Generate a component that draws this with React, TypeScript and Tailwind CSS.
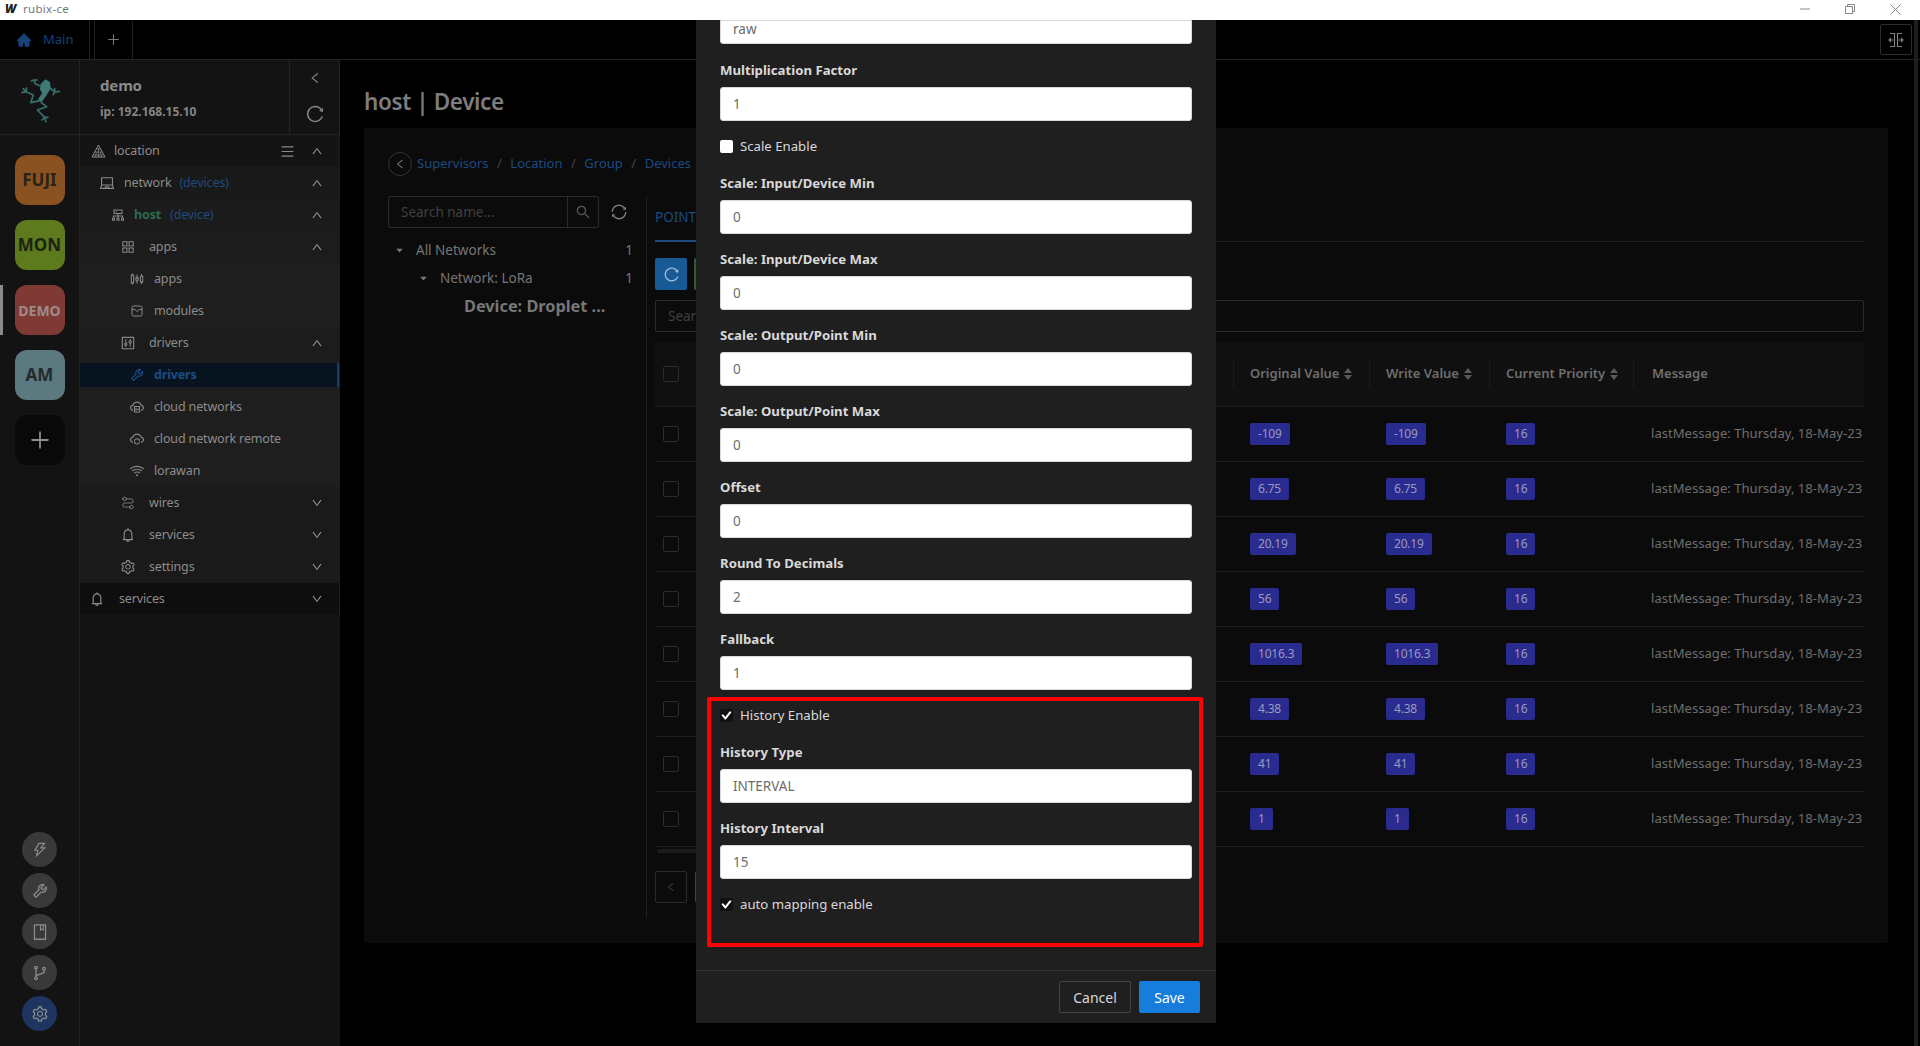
import React from "react";
import {
  AiFillHome, AiOutlinePlus, AiOutlineLeft, AiOutlineReload, AiOutlineMenu, AiOutlineUp, AiOutlineDown,
  AiOutlineLaptop, AiOutlineCluster, AiOutlineAppstore, AiOutlineSliders, AiOutlineControl, AiOutlineTool,
  AiOutlineCloudServer, AiOutlineCloudSync, AiOutlineWifi, AiOutlineBell, AiOutlineSetting, AiOutlineSearch,
  AiOutlineSync, AiOutlineThunderbolt, AiOutlineBook, AiOutlineBranches, AiOutlineCheck, AiFillCaretDown,
} from "react-icons/ai";
import { Route } from "lucide-react";

function Frog() {
  return (
    <svg width="70" height="70" viewBox="0 0 210 210" fill="none" stroke="#37706b" strokeWidth="5" strokeLinejoin="round" strokeLinecap="round">
      <polygon points="92,72 106,58 120,66 122,86 108,108 94,128 84,118 96,100 90,88" fill="#3f7a75" stroke="none" />
      <polyline points="92,78 76,72 72,60" />
      <polyline points="64,63 72,60 82,60" />
      <polyline points="120,84 134,96 148,94" />
      <polyline points="134,86 134,96 130,104" />
      <polyline points="90,122 62,128 70,105 48,95 40,86" />
      <polyline points="50,84 48,95 36,98" />
      <polyline points="94,128 110,140 82,150 104,172 108,185" />
      <polyline points="96,180 104,172 114,172" />
    </svg>
  );
}

function Pyramid() {
  return (
    <svg width="15" height="14" viewBox="0 0 15 14" fill="none" stroke="#8c8c8c" strokeWidth="1">
      <path d="M7.5 1 L14 13 H1 Z" />
      <path d="M5.5 5 H9.5 M4 8 H11 M3 11 H12 M7.5 4 V13 M5.5 8 L4.5 13 M9.5 8 L10.5 13" strokeWidth="0.7" />
    </svg>
  );
}

function ModuleBox() {
  return (
    <svg width="14" height="14" viewBox="0 0 14 14" fill="none" stroke="currentColor" strokeWidth="1">
      <rect x="2" y="2" width="10" height="10" rx="1.5" />
      <path d="M2 5.5 H4.8 L7 7.5 L9.2 5.5 H12" />
    </svg>
  );
}

const up = <AiOutlineUp size={12} className="text-[#a0a0a0]" />;
const down = <AiOutlineDown size={12} className="text-[#a0a0a0]" />;

function Arrow({ children }: { children: React.ReactNode }) {
  return <span className="ml-auto w-[44px] flex justify-center">{children}</span>;
}

function Sub({ icon, label }: { icon: React.ReactNode; label: string }) {
  return (
    <div className="flex items-center h-8 pl-[49px] bg-[#1e1e1e]">
      <span className="w-4 flex justify-center text-[#8a8a8a]">{icon}</span>
      <span className="ml-[9px]">{label}</span>
    </div>
  );
}

function Group({ icon, label, open, bg }: { icon: React.ReactNode; label: string; open?: boolean; bg: string }) {
  return (
    <div className={`flex items-center h-8 pl-[40px] ${bg}`}>
      <span className="w-4 flex justify-center text-[#8a8a8a]">{icon}</span>
      <span className="ml-[13px]">{label}</span>
      <Arrow>{open ? up : down}</Arrow>
    </div>
  );
}

function Sidebar() {
  return (
    <div className="w-[260px] shrink-0 flex flex-col bg-[#131313] text-[12.5px] tracking-[-0.15px] text-[#8c8c8c]">
      <div className="h-[75px] shrink-0 flex border-b border-b-[#242424] border-r border-r-[#242424]">
        <div className="flex-1 pl-5 pt-[13px]">
          <div className="text-[15px] font-bold text-[#8a8a8a] leading-6">demo</div>
          <div className="mt-[5px] text-[12px] font-bold tracking-normal text-[#858585] leading-5">ip: 192.168.15.10</div>
        </div>
        <div className="w-[50px] border-l border-l-[#242424] flex flex-col items-center pt-[11px] text-[#858585]">
          <AiOutlineLeft size={14} />
          <AiOutlineReload size={20} className="mt-[19px]" />
        </div>
      </div>
      <div className="border-r border-r-[#1d1d1d]">
        <div className="flex items-center h-8 pl-[10px] bg-[#141414]">
          <span className="w-4 flex justify-center"><Pyramid /></span>
          <span className="ml-[8px]">location</span>
          <span className="ml-auto text-[#8a8a8a]"><AiOutlineMenu size={15} /></span>
          <span className="w-[44px] flex justify-center">{up}</span>
        </div>
        <div className="flex items-center h-8 pl-[19px] bg-[#191919]">
          <span className="w-4 flex justify-center text-[#8a8a8a]"><AiOutlineLaptop size={16} /></span>
          <span className="ml-[9px]">network</span>
          <span className="ml-[8px] text-[#1f4a80]">(devices)</span>
          <Arrow>{up}</Arrow>
        </div>
        <div className="flex items-center h-8 pl-[30px] bg-[#1b1b1b]">
          <span className="w-4 flex justify-center text-[#8a8a8a]"><AiOutlineCluster size={16} /></span>
          <span className="ml-[8px] font-bold text-[#2f6b50]">host</span>
          <span className="ml-[9px] text-[#1f4a80]">(device)</span>
          <Arrow>{up}</Arrow>
        </div>
        <Group icon={<AiOutlineAppstore size={16} />} label="apps" open bg="bg-[#1c1c1c]" />
        <Sub icon={<AiOutlineSliders size={16} />} label="apps" />
        <Sub icon={<ModuleBox />} label="modules" />
        <Group icon={<AiOutlineControl size={16} />} label="drivers" open bg="bg-[#1c1c1c]" />
        <div className="h-8 py-1 bg-[#1e1e1e]">
          <div className="h-6 flex items-center pl-[49px] bg-[#07131e] border-r-2 border-r-[#17406e] font-bold text-[#1c4c86]">
            <span className="w-4 flex justify-center"><AiOutlineTool size={16} /></span>
            <span className="ml-[9px]">drivers</span>
          </div>
        </div>
        <Sub icon={<AiOutlineCloudServer size={16} />} label="cloud networks" />
        <Sub icon={<AiOutlineCloudSync size={16} />} label="cloud network remote" />
        <Sub icon={<AiOutlineWifi size={16} />} label="lorawan" />
        <Group icon={<Route size={14} strokeWidth={1.4} className="-scale-x-100" />} label="wires" bg="bg-[#1a1a1a]" />
        <Group icon={<AiOutlineBell size={16} />} label="services" bg="bg-[#1a1a1a]" />
        <Group icon={<AiOutlineSetting size={16} />} label="settings" bg="bg-[#1a1a1a]" />
        <div className="flex items-center h-8 pl-[9px] bg-[#0e0e0e]">
          <span className="w-4 flex justify-center text-[#8a8a8a]"><AiOutlineBell size={16} /></span>
          <span className="ml-[14px]">services</span>
          <Arrow>{down}</Arrow>
        </div>
      </div>
    </div>
  );
}

function Badge({ text, bg, fg }: { text: string; bg: string; fg: string }) {
  return (
    <div className={`w-[50px] h-[50px] rounded-[12px] flex items-center justify-center font-bold ${bg} ${fg}`}>{text}</div>
  );
}

function Round({ icon, active }: { icon: React.ReactNode; active?: boolean }) {
  return (
    <div className={`w-[35px] h-[35px] rounded-full flex items-center justify-center text-[#8c8c8c] ${active ? "bg-[#1d3560]" : "bg-[#393939]"}`}>
      {icon}
    </div>
  );
}

function Rail() {
  return (
    <div className="w-20 shrink-0 bg-[#131313] border-r border-r-[#242424] flex flex-col relative">
      <div className="h-[75px] shrink-0 border-b border-b-[#242424] pl-[10px]">
        <Frog />
      </div>
      <div className="flex flex-col items-center gap-[15px] pt-5">
        <Badge text="FUJI" bg="bg-[#8a5220]" fg="text-[#2a2118] text-[17px]" />
        <Badge text="MON" bg="bg-[#5d7a1d]" fg="text-[#1a2410] text-[17px]" />
        <Badge text="DEMO" bg="bg-[#7f3a36]" fg="text-[#a08a86] text-[14px]" />
        <Badge text="AM" bg="bg-[#5d7980]" fg="text-[#232a2c] text-[17px]" />
        <div className="w-[50px] h-[50px] rounded-[12px] bg-[#090909] flex items-center justify-center text-[#8c8c8c]">
          <AiOutlinePlus size={24} />
        </div>
      </div>
      <div className="absolute left-0 top-[225px] w-[3px] h-[50px] bg-[#8a8a8a]" />
      <div className="mt-auto pb-[15px] flex flex-col items-center gap-[6px]">
        <Round icon={<AiOutlineThunderbolt size={18} />} />
        <Round icon={<AiOutlineTool size={18} />} />
        <Round icon={<AiOutlineBook size={18} />} />
        <Round icon={<AiOutlineBranches size={18} />} />
        <Round icon={<AiOutlineSetting size={18} />} active />
      </div>
    </div>
  );
}

function Sorter() {
  return (
    <svg width="8" height="12" viewBox="0 0 8 12" className="ml-[5px] shrink-0" fill="#5a5a5a">
      <path d="M4 0 L8 5 H0 Z M4 12 L0 7 H8 Z" />
    </svg>
  );
}

const rows = ["-109", "6.75", "20.19", "56", "1016.3", "4.38", "41", "1"];

function Chip({ text }: { text: string }) {
  return (
    <span className="inline-flex items-center h-[22px] px-2 rounded-[2px] bg-[#2a2b8e] text-[#9a9ac0] text-[12px] tracking-[-0.2px]">{text}</span>
  );
}

function Box() {
  return <div className="w-4 h-4 rounded-[2px] border border-[#2c2c2c]" />;
}

function PointsTable() {
  const cols = "grid grid-cols-[32px_547px_136px_120px_144px_230px]";
  return (
    <div className="mt-[10px] text-[13px] text-[#6e6e6e]">
      <div className={`${cols} h-[65px] items-center bg-[#101010] border-b border-b-[#1d1d1d] font-semibold`}>
        <div className="flex justify-center"><Box /></div>
        <div className="h-[30px] border-r border-r-[#1b1b1b]" />
        <div className="flex items-center h-[30px] pl-4 border-r border-r-[#1b1b1b]">Original Value<Sorter /></div>
        <div className="flex items-center h-[30px] pl-4 border-r border-r-[#1b1b1b]">Write Value<Sorter /></div>
        <div className="flex items-center h-[30px] pl-4 border-r border-r-[#1b1b1b]">Current Priority<Sorter /></div>
        <div className="pl-[18px]">Message</div>
      </div>
      {rows.map((r) => (
        <div key={r} className={`${cols} h-[55px] items-center border-b border-b-[#1d1d1d]`}>
          <div className="flex justify-center"><Box /></div>
          <div />
          <div className="pl-4"><Chip text={r} /></div>
          <div className="pl-4"><Chip text={r} /></div>
          <div className="pl-4"><Chip text="16" /></div>
          <div className="pl-[17px] whitespace-nowrap text-[13.1px]">lastMessage: Thursday, 18-May-23</div>
        </div>
      ))}
    </div>
  );
}

function Main() {
  return (
    <div className="flex-1 min-w-0 bg-black pl-6 pr-[32px]">
      <div className="h-[68px] pt-[16px] flex items-center text-[22.5px] tracking-[-0.4px] font-semibold text-[#7d7d7d]">host | Device</div>
      <div className="h-[815px] bg-[#0b0b0b] rounded-[2px] pl-6 pr-6 pt-6">
        <div className="h-6 flex items-center text-[13px] text-[#1c4a80]">
          <span className="w-6 h-6 rounded-full border border-[#333] flex items-center justify-center text-[#7a7a7a]"><AiOutlineLeft size={12} /></span>
          <span className="ml-[5px]">Supervisors</span>
          <span className="mx-[8.5px] text-[#444]">/</span>
          <span>Location</span>
          <span className="mx-[8.5px] text-[#444]">/</span>
          <span>Group</span>
          <span className="mx-[8.5px] text-[#444]">/</span>
          <span>Devices</span>
        </div>
        <div className="mt-5 flex h-[722px]">
          <div className="w-[258px] shrink-0 text-[13.5px] text-[#767676]">
            <div className="flex items-center">
              <div className="w-[211px] h-8 rounded-[2px] border border-[#2a2a2a] flex items-center">
                <span className="flex-1 pl-3 text-[#404040]">Search name...</span>
                <span className="w-[31px] h-full border-l border-l-[#2a2a2a] flex items-center justify-center text-[#5a5a5a]"><AiOutlineSearch size={16} /></span>
              </div>
              <AiOutlineSync size={18} className="ml-[11px] text-[#7a7a7a]" />
            </div>
            <div className="mt-[8px] h-7 flex items-center pl-[7px] pr-[13px]">
              <AiFillCaretDown size={9} className="text-[#7a7a7a]" />
              <span className="ml-[12px]">All Networks</span>
              <span className="ml-auto">1</span>
            </div>
            <div className="h-7 flex items-center pl-[31px] pr-[13px]">
              <AiFillCaretDown size={9} className="text-[#7a7a7a]" />
              <span className="ml-[12px]">Network: LoRa</span>
              <span className="ml-auto">1</span>
            </div>
            <div className="h-[28px] flex items-center pl-[76px] text-[16.3px] font-bold text-[#777] whitespace-nowrap">Device: Droplet ...</div>
          </div>
          <div className="flex-1 min-w-0 border-l border-l-[#1d1d1d] pl-2">
            <div className="h-[46px] border-b border-b-[#1d1d1d] flex">
              <div className="h-[46px] w-[60px] pt-[11px] border-b-2 border-b-[#1c4a80] text-[13.5px] text-[#1c4a80]">POINTS</div>
            </div>
            <div className="mt-[16px] flex items-center gap-[7px]">
              <span className="w-8 h-8 rounded-[2px] bg-[#175a96] flex items-center justify-center text-[#a8c0d8]"><AiOutlineReload size={17} /></span>
              <span className="w-8 h-8 rounded-[2px] bg-[#2f5a36]" />
            </div>
            <div className="mt-[10px] h-8 rounded-[2px] border border-[#2a2a2a] pl-3 flex items-center text-[13.5px] text-[#404040]">Search...</div>
            <PointsTable />
            <div className="mt-[2px] h-[4px] w-[500px] ml-[2px] rounded-full bg-[#1c1c1c]" />
            <div className="mt-[18px] flex gap-2">
              <span className="w-8 h-8 rounded-[2px] border border-[#2a2a2a] flex items-center justify-center text-[#3a3a3a]"><AiOutlineLeft size={12} /></span>
              <span className="w-8 h-8 rounded-[2px] border border-[#1c4a80]" />
            </div>
          </div>
        </div>
      </div>
    </div>
  );
}

function Input({ value, cut }: { value: string; cut?: boolean }) {
  return (
    <input
      readOnly
      value={value}
      className={`block w-full bg-white border border-[#d9d9d9] text-[13.5px] text-[#6c6c6c] pl-3 outline-none ${cut ? "h-6 rounded-b-[3px] pb-[7px]" : "h-[34px] mt-[5px] rounded-[3px]"}`}
    />
  );
}

function Field({ label, value }: { label: string; value: string }) {
  return (
    <div>
      <div className="mt-[15px] h-[22px] flex items-center text-[13.2px] font-bold text-[#d9d9d9]">{label}</div>
      <Input value={value} />
    </div>
  );
}

function Check({ label, on }: { label: string; on?: boolean }) {
  return (
    <div className="mt-[15px] h-[22px] flex items-center text-[13.2px] text-[#d9d9d9]">
      <span className={`w-[13px] h-[13px] mb-[1px] rounded-[2px] flex items-center justify-center ${on ? "bg-[#111]" : "bg-white"}`}>
        {on && <AiOutlineCheck size={11} className="text-white" strokeWidth={100} />}
      </span>
      <span className="ml-[7px]">{label}</span>
    </div>
  );
}

function Modal() {
  return (
    <div className="absolute left-[696px] top-5 w-[520px] h-[1003px] bg-[#1f1f1f] flex flex-col">
      <div className="px-6">
        <Input value="raw" cut />
        <div className="h-px" />
        <Field label="Multiplication Factor" value="1" />
        <Check label="Scale Enable" />
        <Field label="Scale: Input/Device Min" value="0" />
        <Field label="Scale: Input/Device Max" value="0" />
        <Field label="Scale: Output/Point Min" value="0" />
        <Field label="Scale: Output/Point Max" value="0" />
        <Field label="Offset" value="0" />
        <Field label="Round To Decimals" value="2" />
        <Field label="Fallback" value="1" />
        <Check label="History Enable" on />
        <Field label="History Type" value="INTERVAL" />
        <Field label="History Interval" value="15" />
        <Check label="auto mapping enable" on />
      </div>
      <div className="mt-auto h-[53px] border-t border-t-[#333] flex items-center justify-end gap-2 pr-4 text-[14px]">
        <span className="w-[72px] h-8 rounded-[2px] border border-[#444] flex items-center justify-center text-[#d9d9d9]">Cancel</span>
        <span className="w-[61px] h-8 rounded-[2px] bg-[#177ddc] flex items-center justify-center text-white">Save</span>
      </div>
    </div>
  );
}

export default function App() {
  return (
    <div className="relative w-[1920px] h-[1046px] overflow-hidden bg-black font-['Noto_Sans',sans-serif]">
      <div className="h-5 bg-white flex items-center text-[11.5px] text-[#777] pb-[2px]">
        <span className="ml-[5px] w-[18px] font-black italic text-[12px] text-[#222]">W</span>
        <span className="tracking-[0.3px]">rubix-ce</span>
        <div className="ml-auto flex items-center gap-[35px] pr-[19px]">
          <svg width="10" height="10" viewBox="0 0 10 10" stroke="#888" fill="none"><path d="M0 5 H10" /></svg>
          <svg width="10" height="10" viewBox="0 0 10 10" stroke="#888" fill="none"><path d="M0.5 2.5 H7.5 V9.5 H0.5 Z M2.5 2.5 V0.5 H9.5 V7.5 H7.5" /></svg>
          <svg width="11" height="11" viewBox="0 0 11 11" stroke="#888" fill="none"><path d="M0.5 0.5 L10.5 10.5 M10.5 0.5 L0.5 10.5" /></svg>
        </div>
      </div>
      <div className="h-10 border-b border-b-[#242424] bg-black flex text-[13px]">
        <div className="w-[90px] border-r border-[#1f1f1f] flex items-center pl-[16px] text-[#17427a]">
          <AiFillHome size={16} />
          <span className="ml-[11px]">Main</span>
        </div>
        <div className="ml-1 w-[39px] border-x border-[#1f1f1f] flex items-center justify-center text-[#7a7a7a] pr-[1px]">
          <AiOutlinePlus size={15} />
        </div>
        <div className="ml-auto mr-[8px] mt-1 w-8 h-[31px] border border-[#2c2c2c] rounded-[2px] flex items-center justify-center">
          <svg width="16" height="16" viewBox="0 0 16 16" fill="none" stroke="#808080" strokeWidth="1.1">
            <path d="M2 1.5 H6.5 V14.5 H2 M14 1.5 H9.5 V14.5 H14 M5.5 8 H1 M3 6 L1 8 L3 10 M10.5 8 H15 M13 6 L15 8 L13 10" />
          </svg>
        </div>
      </div>
      <div className="h-[986px] flex">
        <Rail />
        <Sidebar />
        <Main />
      </div>
      <div className="absolute right-[2px] top-5 bottom-0 w-[4px] bg-[#1d1d1d]" />
      <Modal />
      <div className="absolute left-[707px] top-[697px] w-[496px] h-[250px] border-4 border-[#ff0000] rounded-[2px]" />
    </div>
  );
}
